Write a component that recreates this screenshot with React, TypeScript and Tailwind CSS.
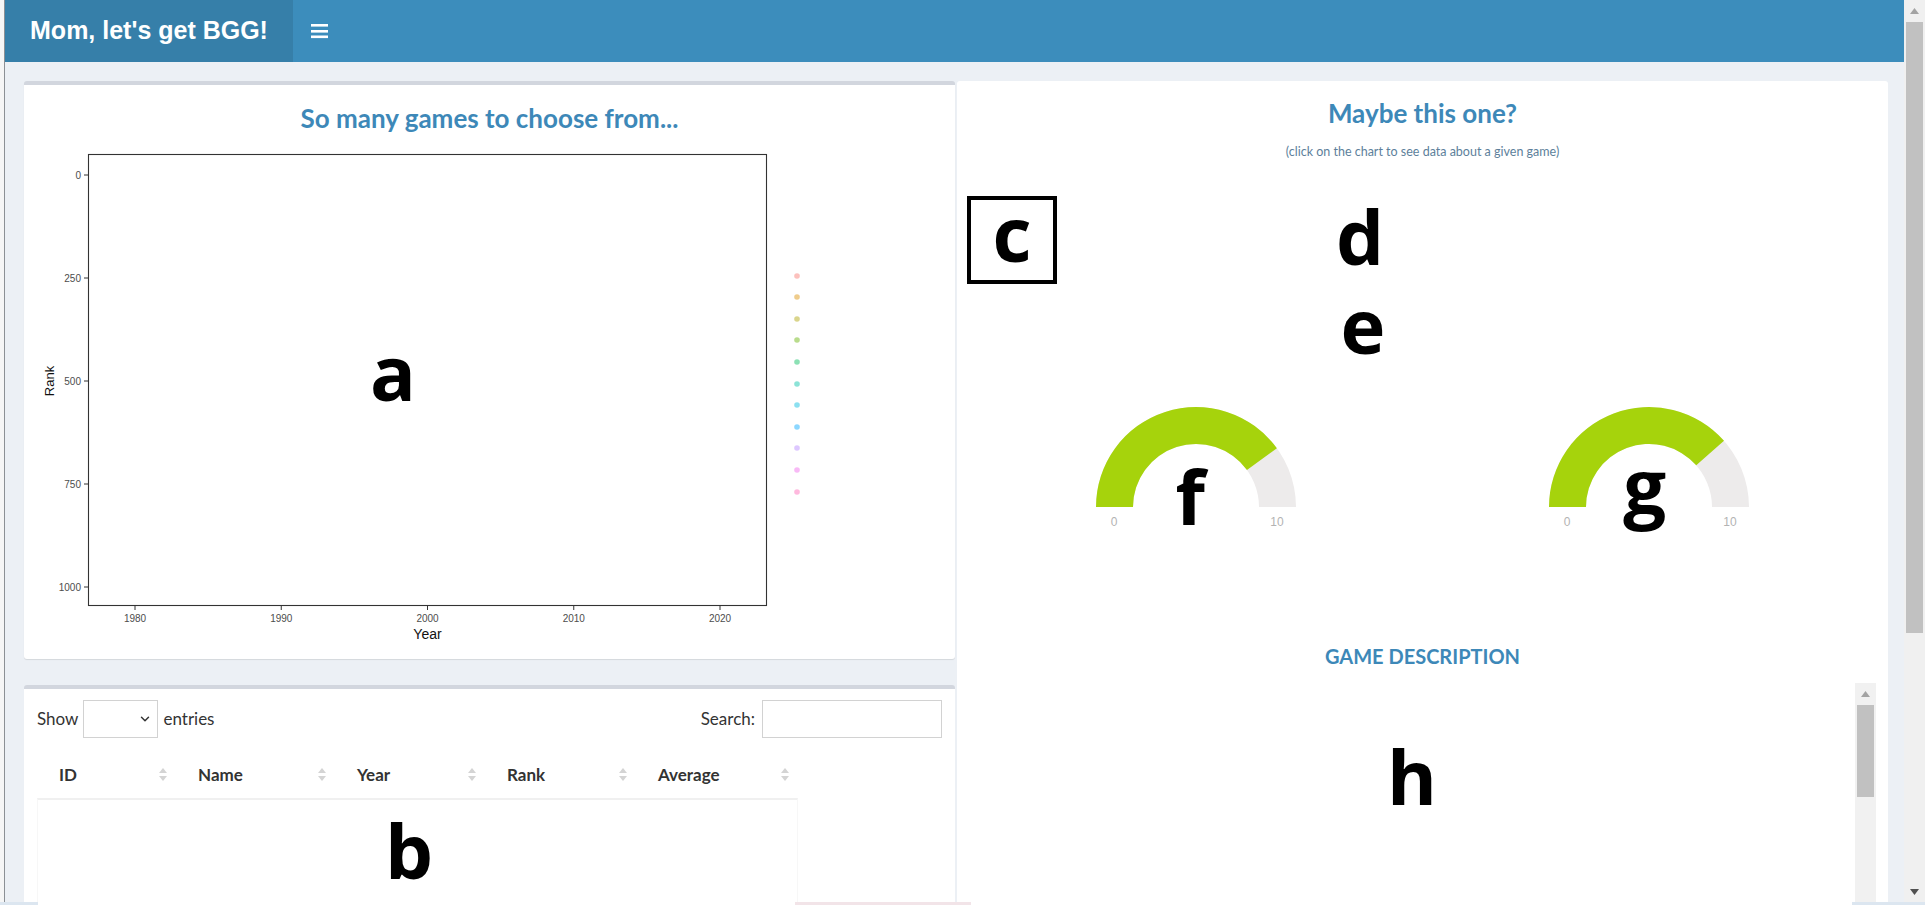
import { ChevronDown } from "lucide-react";

const LETTER =
  "block w-[60px] text-center font-['Open_Sans',sans-serif] font-bold text-[76px] leading-none text-black";

const DOT_COLORS = [
  "#F8766D",
  "#DB8E00",
  "#AEA200",
  "#64B200",
  "#00BD5C",
  "#00C1A7",
  "#00BADE",
  "#00A6FF",
  "#B385FF",
  "#EF67EB",
  "#FF63B6",
];

const DOT_Y = [124, 145, 167, 188, 210, 232, 253, 275, 296, 318, 340];

function Header() {
  return (
    <header className="h-[62px] flex shrink-0 bg-[#3c8dbc]">
      <div className="w-[288px] flex items-center justify-center bg-[#367fa9] text-white font-['Liberation_Sans',Arial,sans-serif] font-bold text-[25px]">
        Mom, let's get BGG!
      </div>
      <div className="flex items-center pl-[18px]">
        <svg width="17" height="15" viewBox="0 0 17 15">
          <rect x="0" y="0" width="17" height="2.6" fill="#fff" />
          <rect x="0" y="6" width="17" height="2.6" fill="#fff" />
          <rect x="0" y="11.5" width="17" height="2.6" fill="#fff" />
        </svg>
      </div>
    </header>
  );
}

function RankPlot() {
  const yTicks = [
    { y: 23, l: "0" },
    { y: 126, l: "250" },
    { y: 229, l: "500" },
    { y: 332, l: "750" },
    { y: 435, l: "1000" },
  ];
  const xTicks = [
    { x: 111, l: "1980" },
    { x: 257.25, l: "1990" },
    { x: 403.5, l: "2000" },
    { x: 549.75, l: "2010" },
    { x: 696, l: "2020" },
  ];
  return (
    <div className="relative h-[503px]">
      <svg width="931" height="503" viewBox="0 0 931 503" className="block">
        <rect x="64.5" y="2.5" width="678" height="451" fill="none" stroke="#333" strokeWidth="1.1" />
        {yTicks.map((t) => (
          <g key={t.l}>
            <line x1="60" x2="64.5" y1={t.y} y2={t.y} stroke="#333" strokeWidth="1" />
            <text
              x="57"
              y={t.y}
              textAnchor="end"
              dominantBaseline="central"
              fontSize="10"
              fill="#4d4d4d"
              fontFamily="Liberation Sans, Arial, sans-serif"
            >
              {t.l}
            </text>
          </g>
        ))}
        {xTicks.map((t) => (
          <g key={t.l}>
            <line x1={t.x} x2={t.x} y1="453.5" y2="458" stroke="#333" strokeWidth="1" />
            <text
              x={t.x}
              y="466"
              textAnchor="middle"
              dominantBaseline="central"
              fontSize="10"
              fill="#4d4d4d"
              fontFamily="Liberation Sans, Arial, sans-serif"
            >
              {t.l}
            </text>
          </g>
        ))}
        <text
          x="403.5"
          y="482"
          textAnchor="middle"
          dominantBaseline="central"
          fontSize="14"
          fill="#111"
          fontFamily="Liberation Sans, Arial, sans-serif"
        >
          Year
        </text>
        <text
          x="25"
          y="229"
          transform="rotate(-90 25 229)"
          textAnchor="middle"
          dominantBaseline="central"
          fontSize="13"
          fill="#111"
          fontFamily="Liberation Sans, Arial, sans-serif"
        >
          Rank
        </text>
        {DOT_Y.map((y, i) => (
          <circle key={y} cx="773" cy={y} r="2.8" fill={DOT_COLORS[i]} fillOpacity="0.45" />
        ))}
      </svg>
      <span className={`${LETTER} absolute left-[339px] top-[182px]`}>a</span>
    </div>
  );
}

function SortIcon() {
  return (
    <svg width="8" height="15" viewBox="0 0 8 15">
      <polygon points="0,6 4,1 8,6" fill="#d4d4d4" />
      <polygon points="0,9 4,14 8,9" fill="#d4d4d4" />
    </svg>
  );
}

function GamesTable() {
  const cols = [
    { name: "ID", w: "w-[139px]" },
    { name: "Name", w: "w-[159px]" },
    { name: "Year", w: "w-[150px]" },
    { name: "Rank", w: "w-[151px]" },
    { name: "Average", w: "w-[162px]" },
  ];
  return (
    <section className="flex-1 min-h-0 flex flex-col bg-white border-t-4 border-[#d2d6de] rounded-t-[3px] text-[#333]">
      <div className="mt-[11px] h-[38px] flex items-center justify-between px-[13px] text-[17px]">
        <div className="flex items-center">
          <span>Show</span>
          <div className="ml-[5px] w-[75px] h-[38px] border border-[#d2d2d2] flex items-center justify-end pr-[5px]">
            <ChevronDown size={14} strokeWidth={2.5} className="text-[#333]" />
          </div>
          <span className="ml-[5px]">entries</span>
        </div>
        <div className="flex items-center">
          <span>Search:</span>
          <div className="ml-[7px] w-[180px] h-[38px] border border-[#d2d2d2]" />
        </div>
      </div>
      <div className="mt-[13px] mx-[13px] w-[761px] flex-1 flex flex-col">
        <div className="h-[47px] flex">
          {cols.map((c) => (
            <div
              key={c.name}
              className={`${c.w} flex items-center justify-between pl-[22px] pr-[9px] font-bold text-[17px]`}
            >
              <span>{c.name}</span>
              <SortIcon />
            </div>
          ))}
        </div>
        <div className="flex-1 border-t-2 border-x border-t-[#f0f0f0] border-x-[#f7f7f7] pt-[12px]">
          <span className={`${LETTER} ml-[341px]`}>b</span>
        </div>
      </div>
    </section>
  );
}

function Gauge({ value, letter, lx, ly }: { value: number; letter: string; lx: string; ly: string }) {
  const cx = 110;
  const cy = 105;
  const R = 100;
  const r = 63;
  const th = Math.PI * (1 - value / 10);
  const ox = cx + R * Math.cos(th);
  const oy = cy - R * Math.sin(th);
  const ix = cx + r * Math.cos(th);
  const iy = cy - r * Math.sin(th);
  const bg = `M ${cx - R} ${cy} A ${R} ${R} 0 0 1 ${cx + R} ${cy} L ${cx + r} ${cy} A ${r} ${r} 0 0 0 ${cx - r} ${cy} Z`;
  const fg = `M ${cx - R} ${cy} A ${R} ${R} 0 0 1 ${ox} ${oy} L ${ix} ${iy} A ${r} ${r} 0 0 0 ${cx - r} ${cy} Z`;
  return (
    <div className="relative w-[220px] h-[130px]">
      <svg width="220" height="130" viewBox="0 0 220 130" className="block">
        <path d={bg} fill="#edebeb" />
        <path d={fg} fill="#a6d30c" />
        <text
          x="28"
          y="120"
          textAnchor="middle"
          dominantBaseline="central"
          fontSize="12"
          fill="#b3b3b3"
          fontFamily="Liberation Sans, Arial, sans-serif"
        >
          0
        </text>
        <text
          x="191"
          y="120"
          textAnchor="middle"
          dominantBaseline="central"
          fontSize="12"
          fill="#b3b3b3"
          fontFamily="Liberation Sans, Arial, sans-serif"
        >
          10
        </text>
      </svg>
      <span className={`${LETTER} absolute ${lx} ${ly}`}>{letter}</span>
    </div>
  );
}

function DetailCard() {
  return (
    <section className="h-full flex flex-col bg-white rounded-t-[3px]">
      <h3 className="mt-[17px] h-[30px] flex items-center justify-center font-bold text-[26px] text-[#3d88b8]">
        Maybe this one?
      </h3>
      <p className="mt-[14px] h-[20px] flex items-center justify-center text-[12.5px] text-[#5d7f9b]">
        (click on the chart to see data about a given game)
      </p>
      <div className="mt-[34px] h-[88px] flex items-start">
        <div className="ml-[10px] w-[90px] h-[88px] border-4 border-black flex justify-center items-start">
          <span className={`${LETTER} mt-[-5px]`}>c</span>
        </div>
        <span className={`${LETTER} ml-[273px] mt-[2px]`}>d</span>
      </div>
      <div className="mt-[3px] h-[76px]">
        <span className={`${LETTER} ml-[376px]`}>e</span>
      </div>
      <div className="mt-[39px] grid grid-cols-2 px-[13px]">
        <div className="flex justify-center">
          <Gauge value={8} letter="f" lx="left-[74px]" ly="top-[56px]" />
        </div>
        <div className="flex justify-center">
          <Gauge value={7.7} letter="g" lx="left-[76px]" ly="top-[45px]" />
        </div>
      </div>
      <h4 className="mt-[112px] h-[24px] flex items-center justify-center font-bold text-[20px] text-[#3d88b8]">
        GAME DESCRIPTION
      </h4>
      <div className="mt-[15px] ml-[19px] mr-[12px] flex-1 min-h-0 flex">
        <div className="flex-1 pt-[55px]">
          <span className={`${LETTER} ml-[406px]`}>h</span>
        </div>
        <div className="w-[21px] flex flex-col bg-[#f1f1f1]">
          <div className="h-[22px] flex items-center justify-center">
            <svg width="9" height="6" viewBox="0 0 9 6">
              <polygon points="0,6 4.5,0 9,6" fill="#a3a3a3" />
            </svg>
          </div>
          <div className="mx-[2px] h-[92px] bg-[#c1c1c1]" />
        </div>
      </div>
    </section>
  );
}

function PageScrollbar() {
  return (
    <div className="w-[21px] shrink-0 flex flex-col bg-[#f0f0f0]">
      <div className="h-[21px] flex items-center justify-center">
        <svg width="9" height="6" viewBox="0 0 9 6">
          <polygon points="0,6 4.5,0 9,6" fill="#a3a3a3" />
        </svg>
      </div>
      <div className="mt-[1px] mx-[2px] h-[611px] bg-[#c1c1c1]" />
      <div className="flex-1" />
      <div className="h-[21px] flex items-center justify-center">
        <svg width="9" height="6" viewBox="0 0 9 6">
          <polygon points="0,0 4.5,6 9,0" fill="#505050" />
        </svg>
      </div>
    </div>
  );
}

export default function App() {
  return (
    <div className="h-screen w-full overflow-hidden flex flex-col bg-white font-['Lato',sans-serif]">
      <div className="flex flex-1 min-h-0">
        <div className="w-[4px] shrink-0 bg-[#f6f6f6]" />
        <div className="w-px shrink-0 bg-[#8c9095]" />
        <main className="flex-1 min-w-0 flex flex-col bg-[#ecf0f5]">
          <Header />
          <div className="flex-1 min-h-0 overflow-hidden flex gap-[2px] pl-[19px] pt-[19px]">
            <div className="w-[931px] flex flex-col gap-[26px]">
              <section className="h-[578px] shrink-0 bg-white border-t-4 border-[#d2d6de] rounded-[3px] shadow-[0_1px_1px_rgba(0,0,0,0.1)]">
                <h3 className="h-[67px] flex items-center justify-center font-bold text-[26px] text-[#3d88b8]">
                  So many games to choose from...
                </h3>
                <RankPlot />
              </section>
              <GamesTable />
            </div>
            <div className="w-[931px]">
              <DetailCard />
            </div>
          </div>
        </main>
        <PageScrollbar />
      </div>
      <div className="h-[3px] shrink-0 flex">
        <div className="w-[38px] bg-[#dce6f0]" />
        <div className="w-[757px] bg-white" />
        <div className="w-[176px] bg-[#f2e4e8]" />
        <div className="flex-1 bg-white" />
        <div className="w-[73px] bg-[#dce6f0]" />
      </div>
    </div>
  );
}
